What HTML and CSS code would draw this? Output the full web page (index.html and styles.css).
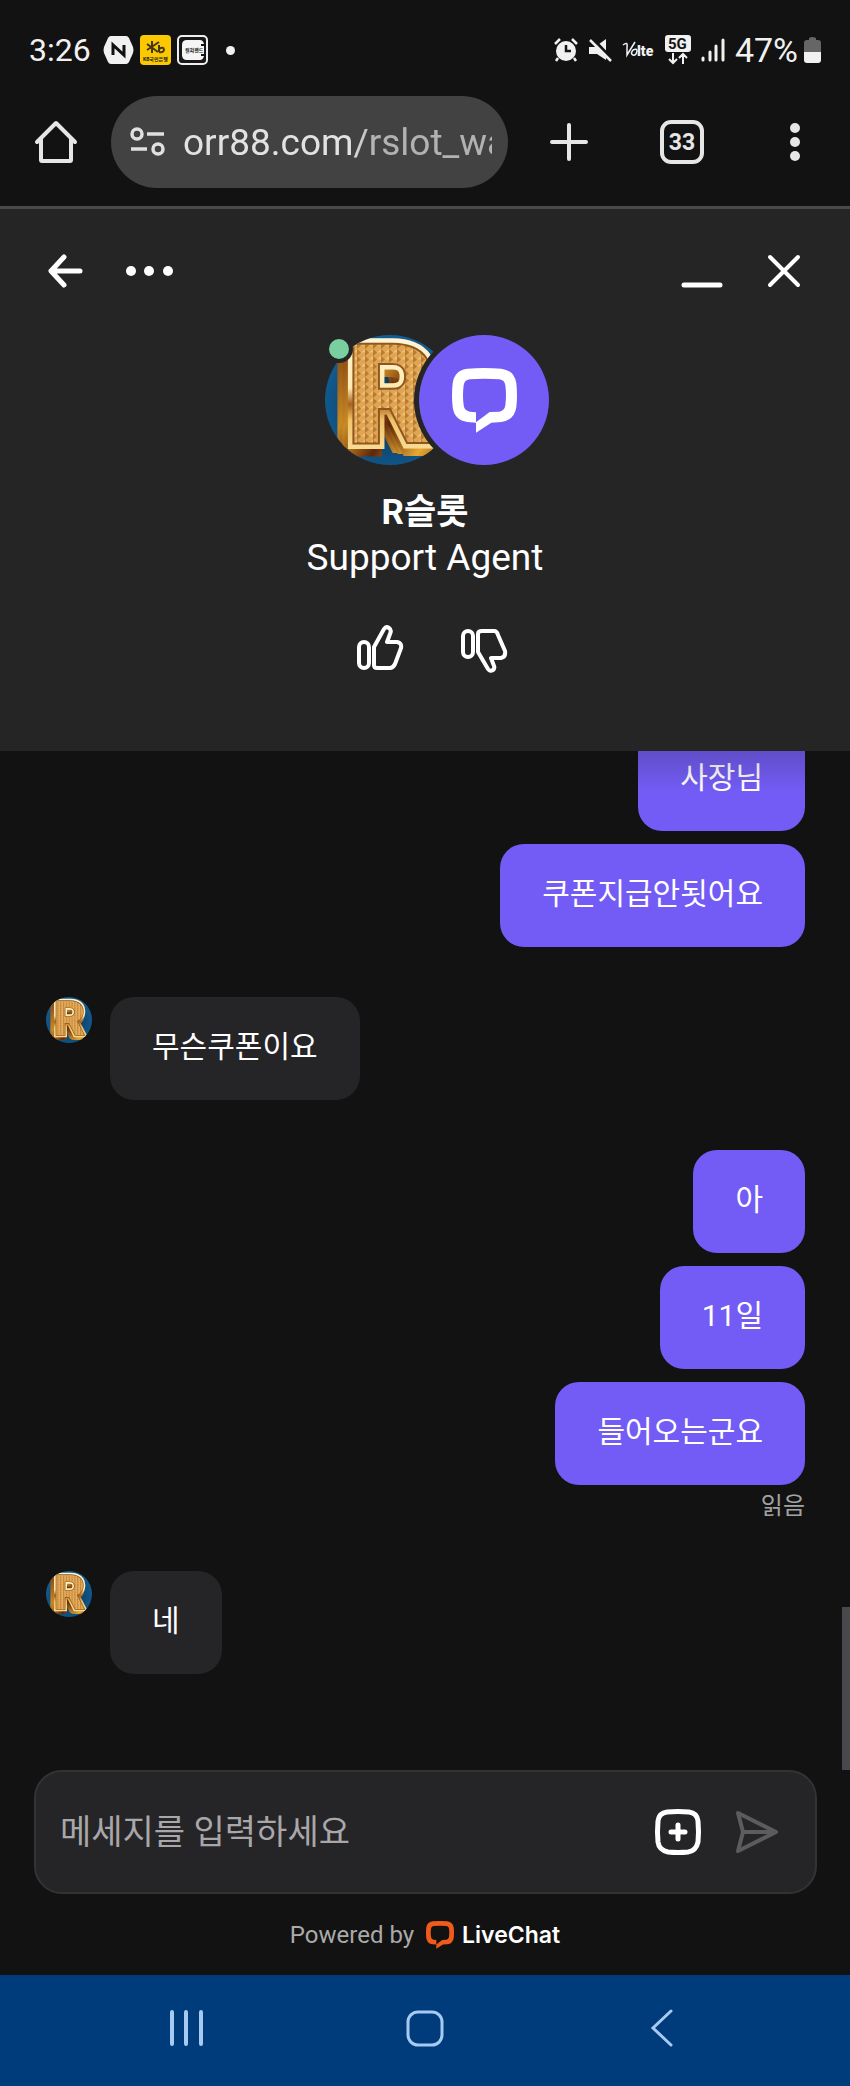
FILE: index.html
```html
<!DOCTYPE html>
<html lang="ko">
<head>
    <meta charset="UTF-8">
    <meta name="viewport" content="width=device-width, initial-scale=1">
    <title>R슬롯</title>
    <link rel="stylesheet" href="styles.css">
</head>
<body>
<svg class="defs" width="0" height="0" aria-hidden="true">
    <defs>
        <radialGradient id="blue" cx="50%" cy="55%" r="55%">
            <stop offset="0" stop-color="#0a2c4c"/>
            <stop offset="1" stop-color="#125d92"/>
        </radialGradient>
        <linearGradient id="side" x1="0" y1="0" x2="1" y2="1">
            <stop offset="0" stop-color="#6b2c0a"/>
            <stop offset="0.35" stop-color="#c88a25"/>
            <stop offset="0.55" stop-color="#5e2608"/>
            <stop offset="0.8" stop-color="#e6a934"/>
            <stop offset="1" stop-color="#8a4c12"/>
        </linearGradient>
        <linearGradient id="rim" x1="0" y1="0" x2="0" y2="1">
            <stop offset="0" stop-color="#fffbe6"/>
            <stop offset="0.45" stop-color="#ffeab0"/>
            <stop offset="0.55" stop-color="#a8621f"/>
            <stop offset="0.65" stop-color="#f0c468"/>
            <stop offset="1" stop-color="#fff2bd"/>
        </linearGradient>
        <pattern id="weave" width="8" height="7" patternUnits="userSpaceOnUse">
            <rect width="8" height="7" fill="#dfa552"/>
            <path d="M0 0l4 3.500-4 3.500z" fill="#b97a32"/>
            <path d="M4 3.500L8 0v3.500z" fill="#efc277"/>
        </pattern>
        <clipPath id="round"><circle cx="65" cy="65" r="65"/></clipPath>
        <symbol id="agent" viewBox="0 0 130 130">
            <g clip-path="url(#round)">
                <rect width="130" height="130" fill="url(#blue)"/>
                <g class="coin" fill="url(#side)" stroke="url(#side)" stroke-width="10">
                    <text x="10" y="114">R</text>
                    <text x="15" y="115">R</text>
                    <text x="21" y="117">R</text>
                </g>
                <g class="coin">
                    <text x="22" y="108" fill="none" stroke="url(#rim)" stroke-width="13">R</text>
                    <text class="front" x="22" y="108" fill="url(#weave)" stroke="#8f561f" stroke-width="4">R</text>
                </g>
            </g>
        </symbol>
        <symbol id="livechat" viewBox="0 0 195 195">
            <path fill-rule="evenodd" d="M46 2Q97-2 148 2Q187 7 193 46Q197 82 193 118Q187 157 148 162L118 164L72 194V164L46 162Q7 157 2 118Q-2 82 2 46Q7 7 46 2ZM53 34Q37 36 35 52Q31 82 35 112Q37 128 53 131L72 133V163L113 132L142 131Q158 128 160 112Q164 82 160 52Q158 36 142 34Q97 31 53 34Z"/>
        </symbol>
    </defs>
</svg>

<div class="status">
    <time class="clock">3:26</time>
    <svg width="31" height="30" viewBox="0 0 31 30"><path d="M8 1h15q2 0 3 2l4 9q1 3 0 6l-4 9q-1 2-3 2H8q-2 0-3-2L1 18q-1-3 0-6l4-9q1-2 3-2z" fill="#f1f1f1"/><path d="M10 20V10l11 10V10" fill="none" stroke="#111" stroke-width="3"/></svg>
    <svg width="31" height="30" viewBox="0 0 31 30"><rect width="31" height="30" rx="4" fill="#fcc800"/><path d="M12 6v12M7 9l11 8M19 7L7 15M19 10v7M19 14q5-3 5 1q-1 3-5 2" fill="none" stroke="#42371a" stroke-width="2"/><text class="tiny" x="3" y="26">KB국민은행</text></svg>
    <svg width="31" height="30" viewBox="0 0 31 30"><rect x="1" y="1" width="29" height="28" rx="4" fill="#171717" stroke="#efefef" stroke-width="2"/><path d="M10 5h13q3 0 4 4v12q-1 4-4 4H10q-5 0-5-5V10q0-5 5-5z" fill="#f5f5f5"/><path d="M24 9h5v2h-5zM24 19h5v2h-5z" fill="#111"/><text class="tiny" x="8" y="17">컬쳐랜드</text></svg>
    <span class="more-dot"></span>
    <span class="grow"></span>
    <svg width="24" height="24" viewBox="0 0 24 24" fill="none" stroke="#f1f1f1" stroke-width="2.500"><circle cx="12" cy="13" r="10" fill="#f1f1f1" stroke="none"/><path d="M1 6l5-5M18 1l5 5M4 20l-2 3M20 20l2 3"/><path d="M12 7v6h5" stroke="#141414"/></svg>
    <svg width="24" height="24" viewBox="0 0 24 24" fill="#f1f1f1"><path d="M1 9h6L18 1v21l-9-6H1z"/><path d="M4 0l21 22" stroke="#141414" stroke-width="3"/><path d="M2 2l21 21" stroke="#f1f1f1" stroke-width="2.500"/></svg>
    <svg width="33" height="20" viewBox="0 0 33 20" fill="#f1f1f1"><path d="M1 5q5-4 4 2v8L13 2M11 10q-3 4 0 5t4-4q0-3-4-1" fill="none" stroke="#f1f1f1" stroke-width="1.500"/><text class="lte" x="15" y="16">lte</text></svg>
    <svg width="26" height="31" viewBox="0 0 26 31" fill="none" stroke="#f1f1f1" stroke-width="2"><rect width="26" height="17" rx="3" fill="#f1f1f1" stroke="none"/><text class="fiveg" x="3" y="14">5G</text><path d="M8 18v10M4 24l4 4 4-4M18 29V19M14 23l4-4 4 4"/></svg>
    <svg width="24" height="24" viewBox="0 0 24 24" stroke="#f1f1f1" stroke-width="3" stroke-linecap="round"><path d="M2 20v2M9 14v8M15 8v14"/><path d="M22 2v20"/></svg>
    <span class="percent">47%</span>
    <svg width="17" height="26" viewBox="0 0 17 26"><path d="M5 1q3-2 7 0v2h2q3 0 3 3v10H0V6q0-3 3-3h2z" fill="#666"/><path d="M0 15h17v8q0 3-3 3H3q-3 0-3-3z" fill="#f1f1f1"/></svg>
</div>

<div class="toolbar">
    <button class="tool" aria-label="홈"><svg width="44" height="44" viewBox="0 0 44 44" fill="none" stroke="#e6e6e6" stroke-width="4" stroke-linecap="round" stroke-linejoin="round"><path d="M3 22L22 3l19 19M7 19v21q0 1 1 1h28q1 0 1-1V19"/></svg></button>
    <div class="address">
        <svg width="36" height="32" viewBox="0 0 36 32" fill="none" stroke="#e0e0e0" stroke-width="3.500"><circle cx="8" cy="8" r="5"/><path d="M18 8h17M2 23h16"/><circle cx="29" cy="23" r="5"/></svg>
        <input class="url" type="text" aria-label="주소" value="orr88.com/rslot_wa">
    </div>
    <button class="tool" aria-label="새 탭"><svg width="44" height="44" viewBox="0 0 44 44" stroke="#e6e6e6" stroke-width="4" stroke-linecap="round"><path d="M22 5v34M5 22h34"/></svg></button>
    <button class="tool tabs" aria-label="탭 33개">33</button>
    <button class="tool" aria-label="메뉴"><svg width="44" height="44" viewBox="0 0 44 44" fill="#e6e6e6"><circle cx="22" cy="8" r="5"/><circle cx="22" cy="22" r="5"/><circle cx="22" cy="36" r="5"/></svg></button>
</div>

<header class="header">
    <div class="header-row">
        <button aria-label="뒤로"><svg width="36" height="36" viewBox="0 0 36 36" fill="none" stroke="#fff" stroke-width="5" stroke-linecap="round" stroke-linejoin="round"><path d="M16 4L3 18l13 14M4 18h28"/></svg></button>
        <button aria-label="더보기"><svg width="48" height="36" viewBox="0 0 48 36" fill="#fff"><circle cx="6" cy="18" r="5"/><circle cx="24" cy="18" r="5"/><circle cx="43" cy="18" r="5"/></svg></button>
        <span class="grow"></span>
        <button aria-label="최소화"><svg width="45" height="36" viewBox="0 0 45 36" stroke="#fff" stroke-width="5" stroke-linecap="round"><path d="M4 32h36"/></svg></button>
        <button aria-label="닫기"><svg width="36" height="36" viewBox="0 0 36 36" stroke="#fff" stroke-width="4" stroke-linecap="round"><path d="M4 4l28 28M32 4L4 32"/></svg></button>
    </div>
    <div class="avatars">
        <svg class="photo" viewBox="0 0 130 130" role="img" aria-label="R슬롯"><use href="#agent"/></svg>
        <span class="online"></span>
        <div class="brand"><svg width="65" height="65"><use href="#livechat"/></svg></div>
    </div>
    <div class="name">R슬롯</div>
    <div class="role">Support Agent</div>
    <div class="rating">
        <button aria-label="좋아요"><svg width="48" height="50" viewBox="0 0 48 50" fill="none" stroke="#fff" stroke-width="4" stroke-linejoin="round"><rect x="3" y="18" width="10" height="26" rx="5"/><path d="M18 23L28 5q2-3 5-1q3 2 1 6l-3 8h10q5 1 4 6l-6 16q-2 4-5 4H21q-3 0-3-3z"/></svg></button>
        <button aria-label="싫어요"><svg width="48" height="50" viewBox="0 0 48 50" fill="none" stroke="#fff" stroke-width="4" stroke-linejoin="round"><rect x="3" y="7" width="10" height="26" rx="5"/><path d="M18 28l10 17q2 3 5 1q2-2 1-4l-3-8h10q5-1 4-7L38 11q-1-4-4-4H22q-4 0-4 3z"/></svg></button>
    </div>
</header>

<main class="log">
    <div class="mine">
        <p class="bubble">사장님</p>
        <p class="bubble">쿠폰지급안됫어요</p>
    </div>
    <div class="theirs">
        <svg class="face" viewBox="0 0 130 130" role="img" aria-label="R슬롯"><use href="#agent"/></svg>
        <p class="bubble">무슨쿠폰이요</p>
    </div>
    <div class="mine">
        <p class="bubble">아</p>
        <p class="bubble">11일</p>
        <p class="bubble">들어오는군요</p>
        <span class="read">읽음</span>
    </div>
    <div class="theirs">
        <svg class="face" viewBox="0 0 130 130" role="img" aria-label="R슬롯"><use href="#agent"/></svg>
        <p class="bubble">네</p>
    </div>
    <span class="thumb"></span>
</main>

<form class="composer">
    <input class="message" type="text" aria-label="메세지" placeholder="메세지를 입력하세요">
    <button type="button" aria-label="첨부"><svg width="48" height="48" viewBox="0 0 48 48" fill="none" stroke="#fff" stroke-width="5" stroke-linecap="round"><path d="M13 4Q24 3 35 4Q43 5 44 13Q45 24 44 34Q42 43 34 44Q24 45 14 44Q5 42 4 34Q3 24 4 13Q5 5 13 4Z"/><path d="M24 17v14M17 24h14"/></svg></button>
    <button type="submit" aria-label="보내기"><svg width="48" height="48" viewBox="0 0 48 48" fill="none" stroke="#5c5c5c" stroke-width="4" stroke-linejoin="round"><path d="M6 5l38 19L6 43l5-19zM11 24h33"/></svg></button>
</form>
<footer class="powered">
    <span>Powered by</span>
    <a href="#"><svg width="28" height="28"><use href="#livechat"/></svg>LiveChat</a>
</footer>

<nav class="navbar">
    <button aria-label="최근 앱"><svg width="38" height="38" viewBox="0 0 38 38" stroke="#a6caf2" stroke-width="4" stroke-linecap="round"><path d="M4 3v32M18 3v32M33 3v32"/></svg></button>
    <button aria-label="홈 화면"><svg width="38" height="38" viewBox="0 0 38 38" fill="none" stroke="#a6caf2" stroke-width="3"><rect x="2" y="3" width="34" height="33" rx="10"/></svg></button>
    <button aria-label="이전"><svg width="38" height="38" viewBox="0 0 38 38" fill="none" stroke="#a6caf2" stroke-width="3" stroke-linecap="round"><path d="M27 2L9 19l18 17"/></svg></button>
</nav>
</body>
</html>
```

FILE: styles.css
```css
*{
    box-sizing:border-box;
}

body{
    display:flex;
    flex-direction:column;
    height:100vh;
    margin:0;
    background:#121212;
    color:#fff;
    font-family:Roboto, "Noto Sans CJK KR", sans-serif;
}

button{
    padding:0;
    border:0;
    background:none;
    color:inherit;
    font:inherit;
}

svg{
    display:block;
    flex:none;
}

input{
    min-width:0;
    flex:1;
    padding:0;
    border:0;
    outline:0;
    background:none;
    font-family:inherit;
}

p{
    margin:0;
}

.defs{
    position:absolute;
}

.grow{
    flex:1;
}

/* 상태 표시줄 */
.status{
    display:flex;
    align-items:center;
    gap:6px;
    height:96px;
    padding:4px 29px 0;
    color:#f1f1f1;
    font-size:32px;
}

.clock{
    margin-right:6px;
}

.more-dot{
    width:9px;
    height:9px;
    margin-left:12px;
    border-radius:50%;
    background:#f1f1f1;
}

.status .grow ~ svg{
    margin-left:4px;
}

.percent{
    margin-left:4px;
    font-size:34px;
}

.status .percent + svg{
    margin-left:0;
}

.tiny{
    fill:#222;
    font-size:5px;
    font-weight:bold;
}

.lte{
    font-size:14px;
    font-weight:900;
}

.fiveg{
    fill:#141414;
    stroke:none;
    font-size:15px;
    font-weight:bold;
}

/* 브라우저 주소창 */
.toolbar{
    display:flex;
    align-items:center;
    gap:69px;
    padding:0 33px 18px 34px;
    border-bottom:3px solid #4a4a4a;
}

.tool{
    flex:none;
    width:44px;
    height:44px;
}

.address{
    display:flex;
    align-items:center;
    flex:1;
    gap:18px;
    height:92px;
    min-width:0;
    margin:0 -30px 0 -36px;
    padding:0 16px 0 18px;
    border-radius:46px;
    background:#424242;
}

.url{
    color:#e2e2e2;
    font-size:37px;
    -webkit-mask-image:linear-gradient(to right, #000 54%, rgba(0,0,0,0.7) 62%);
    mask-image:linear-gradient(to right, #000 54%, rgba(0,0,0,0.7) 62%);
}

.tabs{
    border:4px solid #e6e6e6;
    border-radius:11px;
    color:#e6e6e6;
    font-size:23px;
    font-weight:bold;
}

/* 상담원 정보 */
.header{
    display:flex;
    flex-direction:column;
    align-items:center;
    padding:44px 48px 77px;
    background:#252525;
}

.header-row{
    display:flex;
    align-self:stretch;
    gap:41px;
}

.avatars{
    position:relative;
    display:flex;
    margin:46px 0 25px 24px;
}

.photo{
    width:130px;
    height:130px;
}

.coin{
    font-size:137px;
    font-weight:900;
    font-family:Roboto, sans-serif;
}

.front{
    paint-order:stroke;
}

.online{
    position:absolute;
    top:0;
    left:0;
    width:28px;
    height:28px;
    border:4px solid #252525;
    border-radius:50%;
    background:#79cf9f;
}

.brand{
    position:relative;
    display:flex;
    align-items:center;
    justify-content:center;
    width:130px;
    height:130px;
    margin-left:-36px;
    border-radius:50%;
    background:#735cf5;
    box-shadow:0 0 0 5px #252525;
    fill:#fff;
}

.name,
.role{
    height:45px;
    font-size:35px;
    line-height:45px;
}

.name{
    font-weight:bold;
}

.role{
    font-size:37px;
}

.rating{
    display:flex;
    gap:56px;
    margin:44px 0 0 14px;
}

/* 대화 */
.log{
    position:relative;
    display:flex;
    flex:1;
    flex-direction:column;
    justify-content:flex-end;
    gap:50px;
    min-height:0;
    padding:0 45px 96px 46px;
    overflow:hidden;
}

.log::before{
    content:"";
    position:absolute;
    top:0;
    left:0;
    right:0;
    height:40px;
    background:linear-gradient(rgba(18,18,18,0.2), rgba(18,18,18,0));
    z-index:1;
}

.mine{
    display:flex;
    flex-direction:column;
    align-items:flex-end;
    gap:13px;
}

.theirs{
    display:flex;
    align-items:flex-start;
    gap:18px;
}

.bubble{
    height:103px;
    padding:28px 42px 31px;
    border-radius:24px;
    background:#252427;
    font-size:30px;
    line-height:44px;
}

.mine .bubble{
    background:#735cf5;
}

.face{
    width:46px;
    height:46px;
}

.read{
    height:33px;
    margin-top:-10px;
    color:#a3a3a3;
    font-size:24px;
    line-height:36px;
}

.thumb{
    position:absolute;
    right:0;
    bottom:0;
    width:8px;
    height:163px;
    background:#4a484c;
}

/* 입력창 */
.composer{
    display:flex;
    align-items:center;
    gap:30px;
    height:124px;
    margin:0 33px 0 34px;
    padding:0 35px 0 24px;
    border:2px solid #333;
    border-radius:28px;
    background:#252427;
}

.message{
    color:#fff;
    font-size:34px;
}

.message::placeholder{
    color:#a9a7aa;
}

.powered{
    display:flex;
    align-items:center;
    justify-content:center;
    gap:12px;
    height:81px;
    color:#aaa;
    font-size:24px;
}

.powered a{
    display:flex;
    align-items:center;
    gap:8px;
    color:#fff;
    font-family:Inter, sans-serif;
    font-size:23px;
    font-weight:600;
    text-decoration:none;
    fill:#f05a1a;
}

.navbar{
    display:flex;
    align-items:center;
    justify-content:space-around;
    height:111px;
    padding:0 8% 6px;
    background:#003b7c;
}
```
